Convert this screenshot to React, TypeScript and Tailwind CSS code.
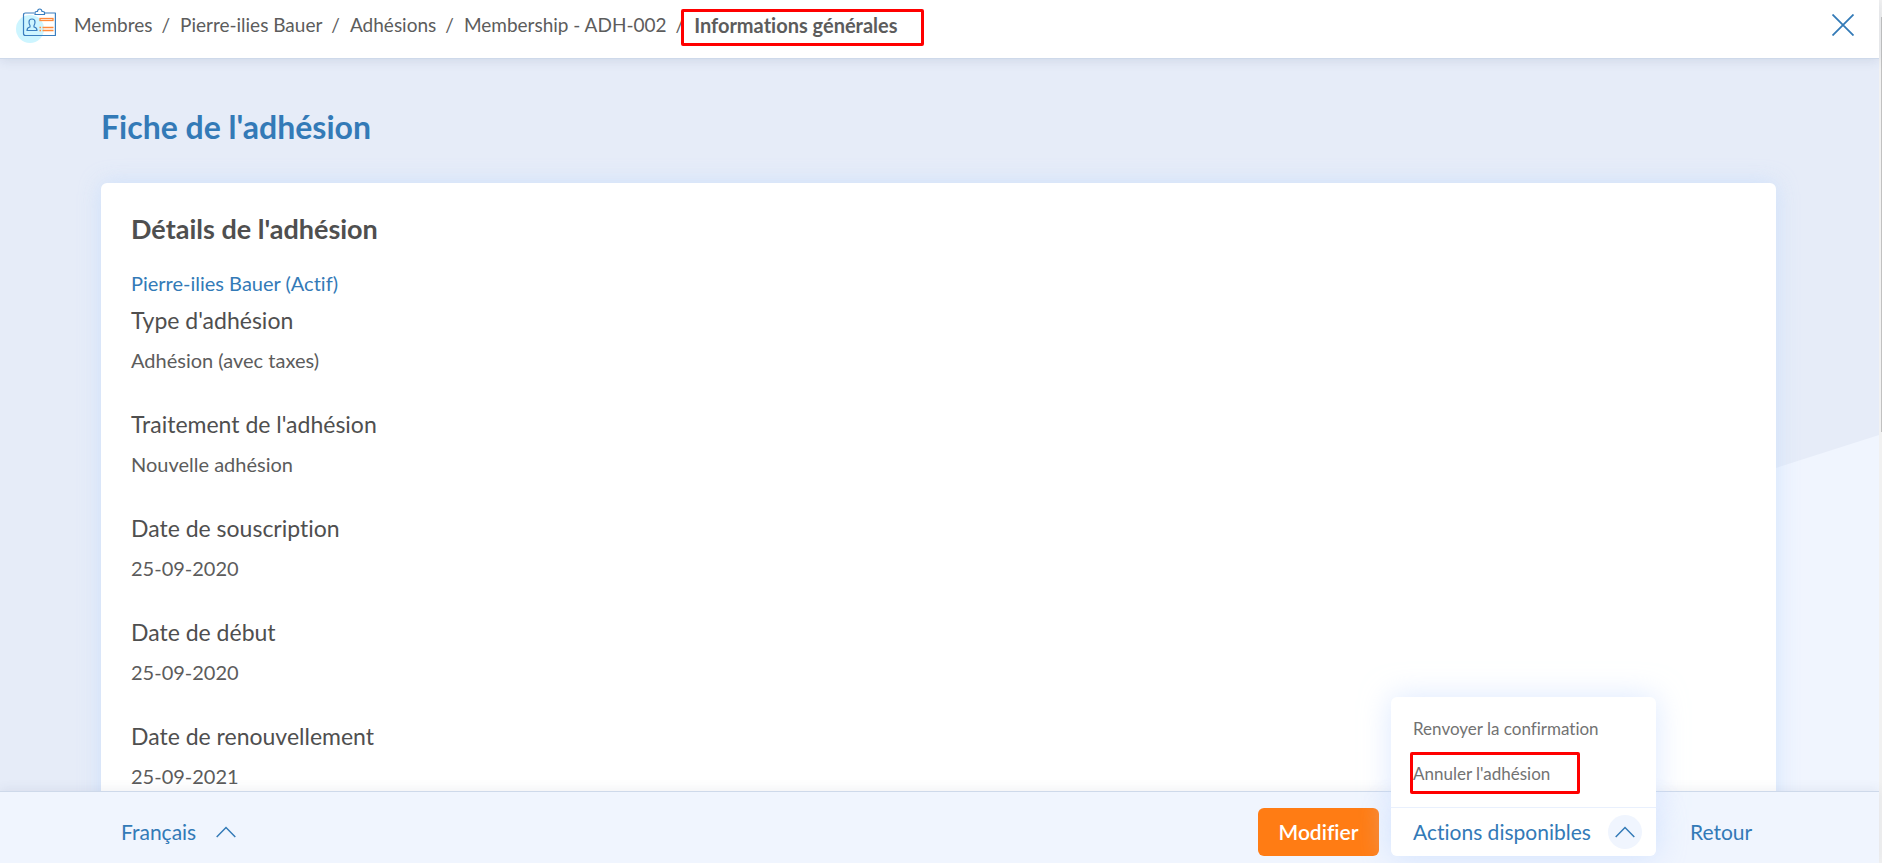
import { type ReactNode } from 'react'

interface Field {
  label: string
  value: string
}

const fields: Field[] = [
  { label: "Type d'adhésion", value: 'Adhésion (avec taxes)' },
  { label: "Traitement de l'adhésion", value: 'Nouvelle adhésion' },
  { label: 'Date de souscription', value: '25-09-2020' },
  { label: 'Date de début', value: '25-09-2020' },
  { label: 'Date de renouvellement', value: '25-09-2021' },
]

const crumbs = ['Membres', 'Pierre-ilies Bauer', 'Adhésions', 'Membership - ADH-002']

function MembershipIcon() {
  return (
    <svg width="40" height="38" viewBox="0 -2 40 38" fill="none" aria-hidden="true">
      <circle cx="14" cy="21" r="14" fill="#cdf5ff" />
      <g stroke="#3a7fc0" strokeWidth="1.2" strokeLinejoin="round">
        <path d="M18 5H9.5Q7.5 5 7.5 7V25.5Q7.5 27.5 9.5 27.5H39.4V5H29" />
        <path d="M19 6.5V4.5Q19 3.5 20.5 3.5H21.5Q21.7 1 23.7 1T26 3.5H27Q28.5 3.5 28.5 4.5V6.5Z" fill="#fff" />
        <path d="M14 17.5Q13 16 13 14Q13 11 16 11T19 14Q19 16 18 17.5V19Q21 19.5 21 22.5H11Q11 19.5 14 19Z" />
      </g>
      <g stroke="#ff8a3c" strokeWidth="1.3">
        <rect x="24" y="10.5" width="13" height="2" />
        <path d="M23.5 19.5H25M26.5 19.5H37.5M23.5 22.5H25M26.5 22.5H37.5" />
      </g>
    </svg>
  )
}

function ChevronUp() {
  return (
    <svg width="20" height="12" viewBox="0 0 20 12" fill="none" stroke="#337ab7" strokeWidth="1.5" aria-hidden="true">
      <path d="M0.7 11L10 1.5L19.3 11" />
    </svg>
  )
}

function Highlight({ className }: { className: string }) {
  return (
    <span
      aria-hidden="true"
      className={`pointer-events-none absolute rounded-[2px] border-3 border-[#ff0000] ${className}`}
    />
  )
}

function MenuItem({ children }: { children: ReactNode }) {
  return (
    <button
      type="button"
      role="menuitem"
      className="relative flex h-[45px] w-full items-center px-[22px] pb-[2px] text-[17px] whitespace-nowrap text-[#727272]"
    >
      {children}
    </button>
  )
}

export default function App() {
  return (
    <div className="flex h-screen bg-[#e6ecf8] font-[Lato,sans-serif] text-[20px] leading-6 text-[#5c5c5c] [font-variant-ligatures:none]">
      <div className="flex min-w-0 flex-1 flex-col">
        {/* Breadcrumb bar */}
        <header className="relative z-10 flex h-[59px] shrink-0 items-center justify-between border-b border-[#ced9ea] bg-white pr-[25px] pb-2 pl-4 shadow-[0_2px_10px_rgba(60,80,120,0.12)]">
          <div className="flex items-center gap-[18px]">
            <MembershipIcon />
            <nav aria-label="Fil d'Ariane">
              <ol className="flex items-center gap-[10px] whitespace-nowrap">
                {crumbs.map((crumb) => (
                  <li key={crumb} className="flex gap-[9px] text-[19px]">
                    <a href="#">{crumb}</a>
                    <span aria-hidden="true">/</span>
                  </li>
                ))}
                <li className="relative font-bold" aria-current="page">
                  Informations générales
                  <Highlight className="-top-1 -left-[13px] h-[37px] w-[243px]" />
                </li>
              </ol>
            </nav>
          </div>
          <button type="button" aria-label="Fermer">
            <svg width="22" height="22" viewBox="0 0 22 22" stroke="#337ab7" strokeWidth="1.8" aria-hidden="true">
              <path d="M0.5 0.5L21.5 21.5M21.5 0.5L0.5 21.5" />
            </svg>
          </button>
        </header>

        <main className="relative min-h-0 flex-1 overflow-hidden pt-[49px] pr-[103px] pl-[101px]">
          {/* Slanted light backdrop */}
          <svg
            className="absolute right-0 bottom-0"
            width="1112"
            height="356"
            viewBox="0 0 1112 356"
            aria-hidden="true"
          >
            <path d="M0 356L1112 0V356Z" fill="#f0f5fe" />
          </svg>

          <h1 className="text-[32px] leading-[38px] font-bold text-[#337ab7]">Fiche de l'adhésion</h1>

          <section className="relative mt-[37px] rounded-md bg-white px-[30px] pt-[30px] pb-10 shadow-[0_0_22px_rgba(195,220,252,0.7)]">
            <h2 className="text-[27px] leading-8 font-bold text-[#4f4f4f]">Détails de l'adhésion</h2>
            <a href="#" className="mt-[26px] block text-[#337ab7]">
              Pierre-ilies Bauer (Actif)
            </a>
            <dl className="mt-[13px] flex flex-col gap-10">
              {fields.map((field) => (
                <div key={field.label} className="flex flex-col gap-4">
                  <dt className="text-[23px] text-[#4f4f4f]">{field.label}</dt>
                  <dd>{field.value}</dd>
                </div>
              ))}
            </dl>
          </section>
        </main>

        {/* Action bar */}
        <footer className="relative z-10 flex h-[72px] shrink-0 items-start justify-between border-t border-[#ced9ea] bg-[#f0f5fe] pt-4 pr-[103px] pl-[121px] text-[21px] text-[#337ab7] shadow-[0_-2px_10px_rgba(60,80,120,0.08)]">
          <button type="button" className="flex h-12 items-center gap-5">
            Français
            <ChevronUp />
          </button>

          <div className="flex gap-3">
            <button type="button" className="h-12 w-[121px] rounded-md bg-[#ff7c14] font-semibold text-white">
              Modifier
            </button>

            <div className="relative w-[265px] rounded-md shadow-[0_0_30px_rgba(195,217,255,0.7)]">
              <div
                role="menu"
                aria-label="Actions disponibles"
                className="absolute bottom-full left-0 w-full rounded-t-md border-b border-[#e9f0fd] bg-white py-[10px] shadow-[0_0_30px_rgba(195,217,255,0.6)]"
              >
                <MenuItem>Renvoyer la confirmation</MenuItem>
                <MenuItem>
                  Annuler l'adhésion
                  <Highlight className="top-0 left-[19px] h-[42px] w-[170px]" />
                </MenuItem>
              </div>
              <button
                type="button"
                aria-haspopup="menu"
                aria-expanded="true"
                className="relative flex h-12 w-full items-center justify-between rounded-b-md bg-white pr-[14px] pl-[22px] whitespace-nowrap"
              >
                Actions disponibles
                <span className="flex size-[34px] items-center justify-center rounded-full bg-[#f0f5fe]">
                  <ChevronUp />
                </span>
              </button>
            </div>

            <button type="button" className="h-12 w-[108px] px-[22px] text-left">
              Retour
            </button>
          </div>
        </footer>
      </div>

      {/* Scroll track */}
      <div className="flex w-[3px] shrink-0 justify-end bg-[#f1f1f1] pt-[17px]">
        <div className="h-[49%] w-px bg-[#c1c1c1]" />
      </div>
    </div>
  )
}
